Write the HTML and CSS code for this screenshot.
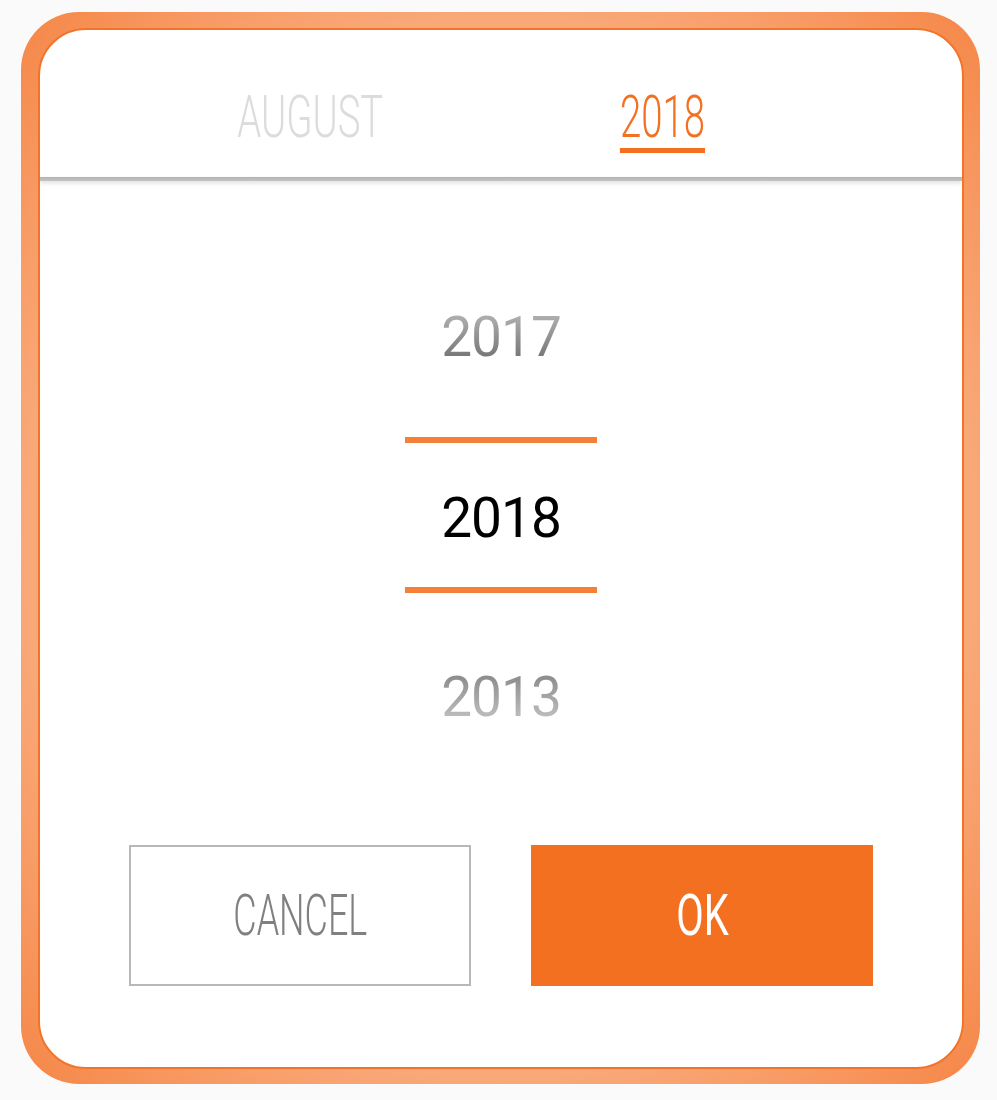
FILE: index.html
```html
<!DOCTYPE html>
<html>
<head>
<meta charset="utf-8">
<link rel="stylesheet" href="styles.css">
</head>
<body>
<div class="frame">
  <div class="dialog">
    <div class="header">
      <div class="tab"><span class="tab-label">AUGUST</span></div>
      <div class="tab"><span class="tab-label active">2018</span></div>
    </div>
    <div class="divider"></div>
    <div class="picker">
      <div class="year year-prev">2017</div>
      <div class="selected">2018</div>
      <div class="year year-next">2013</div>
    </div>
    <div class="actions">
      <div class="btn btn-cancel"><span class="btn-label">CANCEL</span></div>
      <div class="btn btn-ok"><span class="btn-label">OK</span></div>
    </div>
  </div>
</div>
</body>
</html>
```
FILE: styles.css
```css
html, body {
  margin: 0;
  padding: 0;
  background: #fafafa;
}
body {
  font-family: Roboto, "Liberation Sans", sans-serif;
}
.frame {
  box-sizing: border-box;
  margin: 12px 0 0 21px;
  width: 959px;
  height: 1072px;
  padding: 16px 16px 15px 17px;
  border-radius: 58px;
  background: radial-gradient(ellipse farthest-corner at 50% 50%, #fbb88e 0%, #f9a878 70%, #f58646 100%);
  display: flex;
}
.dialog {
  flex: 1;
  background: #fff;
  border: 2px solid #f37428;
  border-radius: 48px;
  display: flex;
  flex-direction: column;
  overflow: hidden;
}
.header {
  box-sizing: border-box;
  height: 147px;
  padding: 57px 0 0 150px;
  display: flex;
  gap: 112px;
}
.tab {
  width: 240px;
  text-align: center;
}
.tab-label {
  display: inline-block;
  font-size: 59px;
  line-height: 59px;
  font-weight: 300;
  color: #dcdcdc;
  padding-bottom: 2px;
  border-bottom: 5px solid transparent;
  transform: scaleX(0.65);
  transform-origin: 50% 50%;
}
.tab-label.active {
  color: #f37021;
  border-bottom-color: #f37021;
}
.divider {
  height: 4px;
  background: linear-gradient(180deg, #b3b3b3, #c4c4c4);
  box-shadow: 0 2px 4px rgba(0, 0, 0, 0.14);
}
.picker {
  display: flex;
  flex-direction: column;
  align-items: center;
  padding-top: 116px;
}
.year {
  width: 192px;
  height: 80px;
  line-height: 80px;
  text-align: center;
  font-size: 55px;
  letter-spacing: -1px;
  -webkit-background-clip: text;
  background-clip: text;
  color: transparent;
}
.year-prev {
  background-image: linear-gradient(180deg, #adadad 25%, #7a7a7a 72%);
}
.year-next {
  margin-top: 64px;
  background-image: linear-gradient(180deg, #8e8e8e 25%, #bababa 72%);
}
.selected {
  box-sizing: border-box;
  margin-top: 60px;
  width: 192px;
  height: 156px;
  border-top: 6px solid #f5803a;
  border-bottom: 6px solid #f5803a;
  padding-top: 5px;
  display: flex;
  align-items: center;
  justify-content: center;
  font-size: 55px;
  letter-spacing: -1px;
  line-height: 56px;
  color: #000;
}
.actions {
  margin-top: 108px;
  display: flex;
  justify-content: center;
  gap: 60px;
}
.btn {
  box-sizing: border-box;
  width: 342px;
  height: 141px;
  line-height: 141px;
  text-align: center;
  font-size: 57px;
}
.btn-cancel {
  border: 2px solid #b8b8b8;
  line-height: 137px;
  color: #808080;
}
.btn-ok {
  background: #f37021;
  color: #fff;
}
.btn-label {
  display: inline-block;
  transform-origin: 50% 50%;
}
.btn-cancel .btn-label {
  font-weight: 300;
  transform: scaleX(0.63);
}
.btn-ok .btn-label {
  transform: scaleX(0.7);
}
```
